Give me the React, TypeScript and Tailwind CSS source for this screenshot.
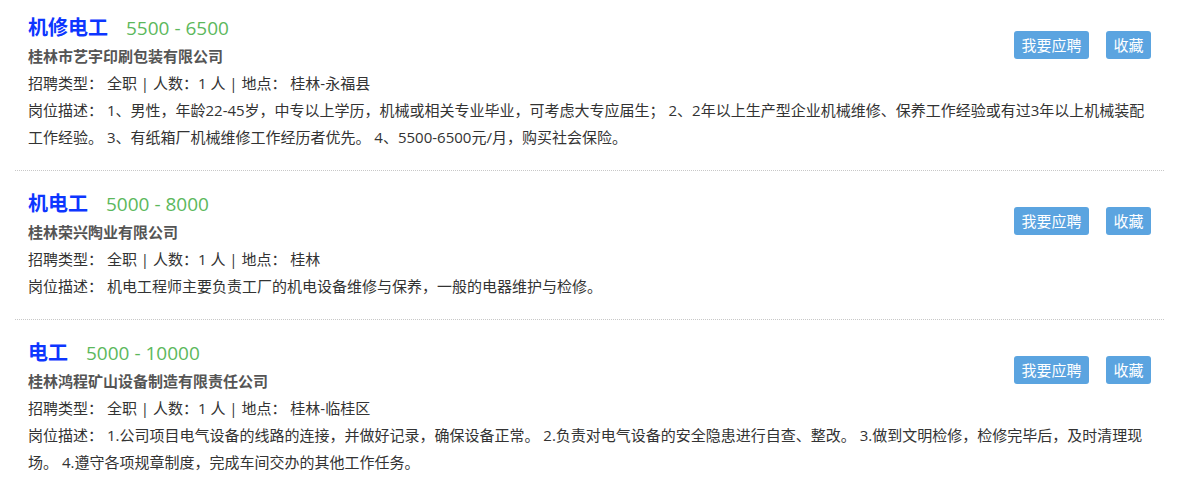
import React from 'react';

interface Job {
  title: string;
  salary: string;
  company: string;
  location: string;
  desc: string;
}

const jobs: Job[] = [
  {
    title: '机修电工',
    salary: '5500 - 6500',
    company: '桂林市艺宇印刷包装有限公司',
    location: '桂林-永福县',
    desc: '1、男性，年龄22-45岁，中专以上学历，机械或相关专业毕业，可考虑大专应届生； 2、2年以上生产型企业机械维修、保养工作经验或有过3年以上机械装配工作经验。 3、有纸箱厂机械维修工作经历者优先。 4、5500-6500元/月，购买社会保险。',
  },
  {
    title: '机电工',
    salary: '5000 - 8000',
    company: '桂林荣兴陶业有限公司',
    location: '桂林',
    desc: '机电工程师主要负责工厂的机电设备维修与保养，一般的电器维护与检修。',
  },
  {
    title: '电工',
    salary: '5000 - 10000',
    company: '桂林鸿程矿山设备制造有限责任公司',
    location: '桂林-临桂区',
    desc: '1.公司项目电气设备的线路的连接，并做好记录，确保设备正常。 2.负责对电气设备的安全隐患进行自查、整改。 3.做到文明检修，检修完毕后，及时清理现场。 4.遵守各项规章制度，完成车间交办的其他工作任务。',
  },
];

const JobItem: React.FC<{ job: Job; first?: boolean }> = ({ job, first }) => (
  <div className={`px-[13px] pb-[19px] border-b border-dotted border-[#c8c8c8] ${first ? 'pt-[13px]' : 'pt-[18px]'}`}>
    <div className="flex items-start justify-between">
      <div>
        <div className="flex items-baseline leading-[30px]">
          <span className="text-[20px] font-bold text-[#0d36ff]">{job.title}</span>
          <span className="ml-[18px] text-[19px] text-[#5cb85c]">{job.salary}</span>
        </div>
        <div className="text-[15px] font-bold text-[#555] leading-[27px]">{job.company}</div>
        <div className="text-[15px] text-[#333] leading-[27px]">
          {'招聘类型： 全职 | 人数：1 人 | 地点： ' + job.location}
        </div>
      </div>
      <div className="mt-[18px] flex gap-[17px]">
        <button type="button" className="h-[28px] px-[7.5px] rounded-[3px] bg-[#5ba4e0] text-white text-[15px] leading-[28px]">
          我要应聘
        </button>
        <button type="button" className="h-[28px] px-[7.5px] rounded-[3px] bg-[#5ba4e0] text-white text-[15px] leading-[28px]">
          收藏
        </button>
      </div>
    </div>
    <p className="text-[15px] text-[#333] leading-[27px]">{'岗位描述： ' + job.desc}</p>
  </div>
);

export default function App() {
  return (
    <div className="min-h-screen bg-white px-[15px] font-['Open_Sans','Noto_Sans_CJK_SC',sans-serif]">
      {jobs.map((job, i) => (
        <JobItem key={job.title} job={job} first={i === 0} />
      ))}
    </div>
  );
}
